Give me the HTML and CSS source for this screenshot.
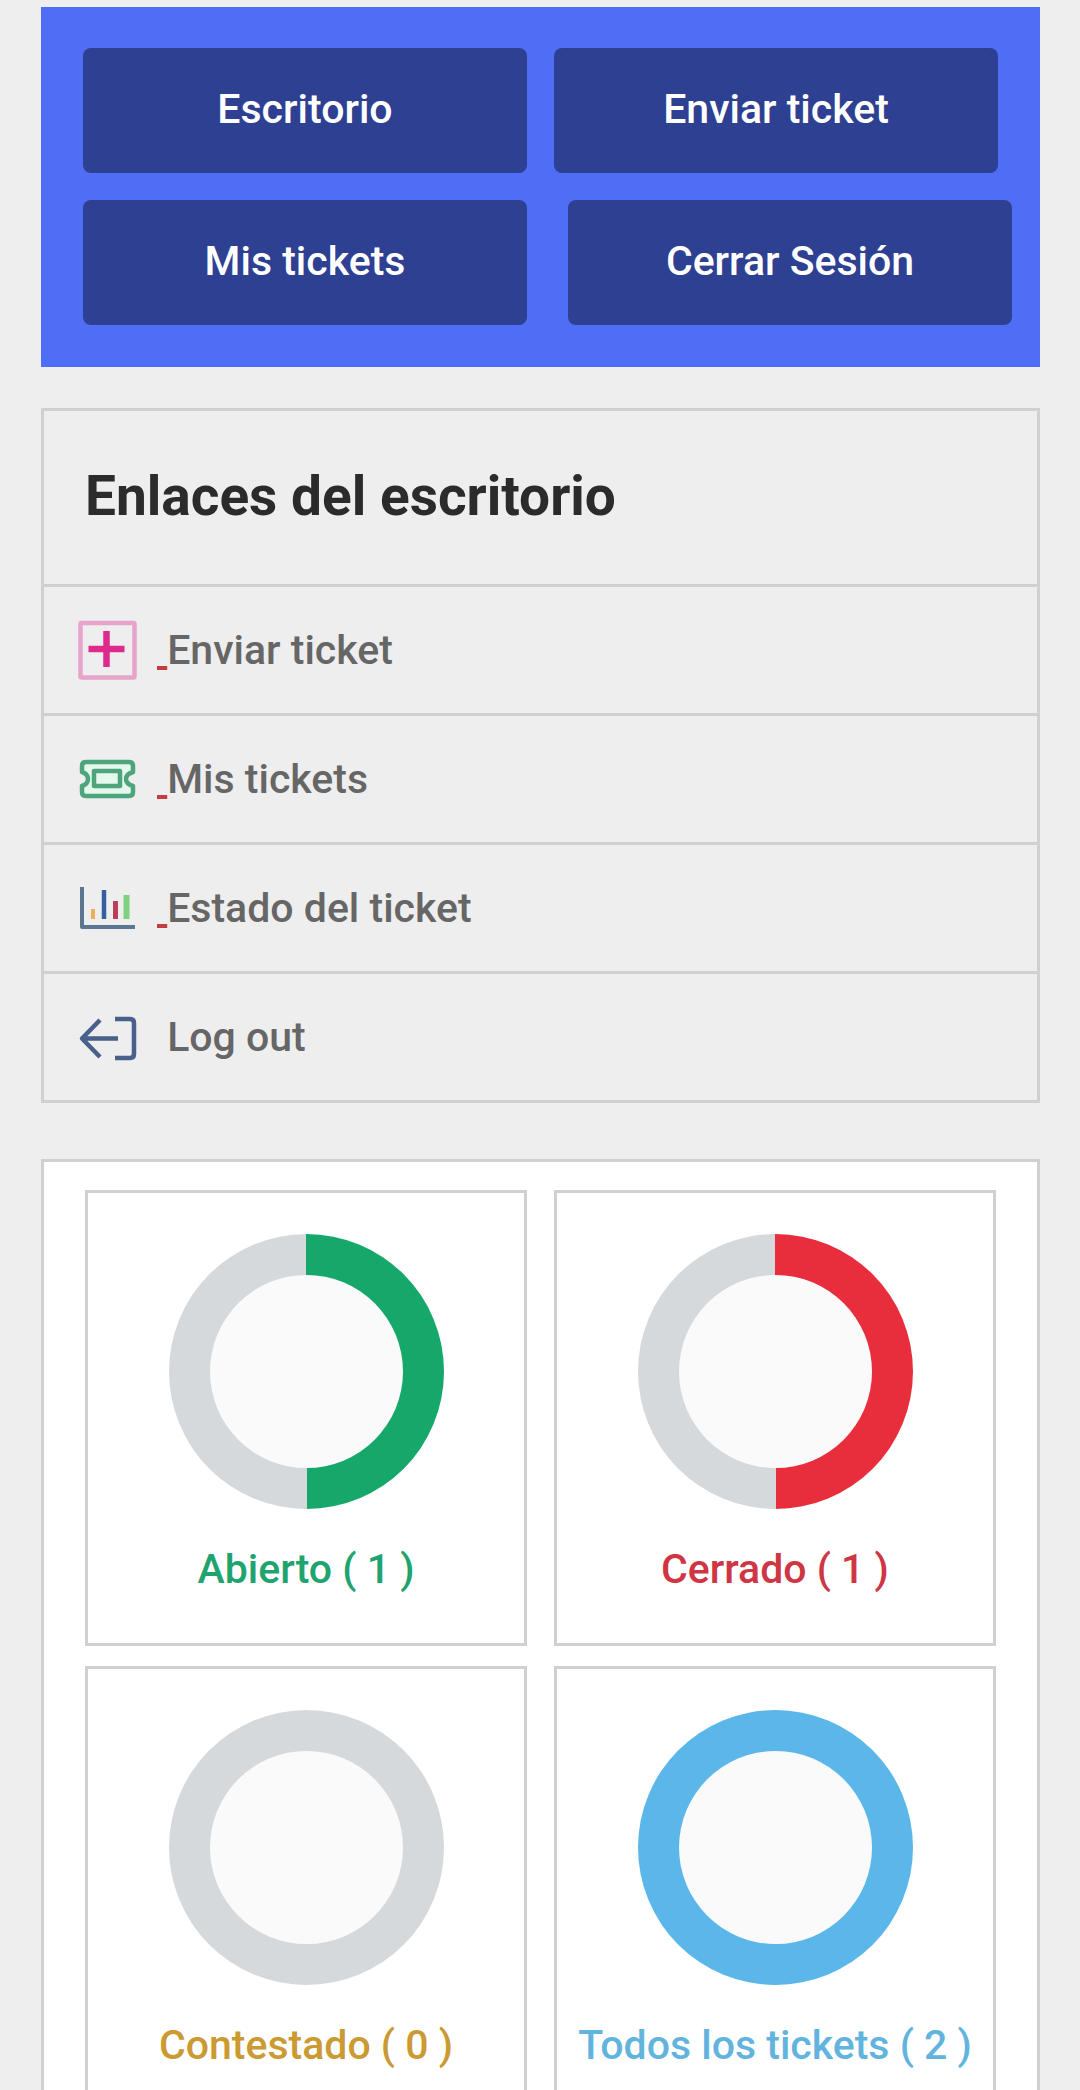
FILE: index.html
```html
<!DOCTYPE html>
<html lang="es">
<head>
    <meta charset="UTF-8">
    <meta name="viewport" content="width=device-width, initial-scale=1.0">
    <title>Escritorio</title>
    <link rel="stylesheet" href="styles.css">
</head>
<body>
    <nav class="top-menu">
        <a class="menu-button" href="#escritorio">Escritorio</a>
        <a class="menu-button" href="#enviar">Enviar ticket</a>
        <a class="menu-button" href="#tickets">Mis tickets</a>
        <a class="menu-button menu-logout" href="#salir">Cerrar Sesión</a>
    </nav>

    <section class="links-panel">
        <h2>Enlaces del escritorio</h2>
        <a class="link-row" href="#enviar">
            <svg class="link-icon" viewBox="0 0 60 60" fill="none">
                <rect x="3.5" y="3" width="54" height="54.5" rx="1" stroke="#e8a3cb" stroke-width="4.5"/>
                <path d="M29.5 11v36M11.5 29h36" stroke="#dd2a8c" stroke-width="6.5"/>
            </svg>
            <span class="link-mark">&nbsp;</span><span class="link-text">Enviar ticket</span>
        </a>
        <a class="link-row" href="#tickets">
            <svg class="link-icon" viewBox="0 0 60 60" fill="#e6f8ee" stroke="#4fa57b" stroke-width="4.5" stroke-linejoin="round">
                <path d="M9 13H52Q56 13 56 17V23Q49 25 49 30Q49 35 56 37V43Q56 47 52 47H9Q5 47 5 43V37Q11 35 11 30Q11 25 5 23V17Q5 13 9 13Z"/>
                <rect x="17" y="22" width="26" height="15"/>
            </svg>
            <span class="link-mark">&nbsp;</span><span class="link-text">Mis tickets</span>
        </a>
        <a class="link-row" href="#estado">
            <svg class="link-icon" viewBox="0 0 60 60" fill="none" stroke-width="4">
                <path d="M5 9V49H58" stroke="#5b7690" stroke-linejoin="round"/>
                <path d="M16 31V41" stroke="#f0ad5e"/>
                <path d="M27 12V41" stroke="#3560a0" stroke-width="4.5"/>
                <path d="M38.5 23V41" stroke="#b8405c" stroke-width="5"/>
                <path d="M49.5 17V41" stroke="#7fd07f" stroke-width="6"/>
            </svg>
            <span class="link-mark">&nbsp;</span><span class="link-text">Estado del ticket</span>
        </a>
        <a class="link-row" href="#salir">
            <svg class="link-icon" viewBox="0 0 60 60" fill="none" stroke="#48608a" stroke-width="4.5" stroke-linejoin="round">
                <path d="M41 31.5H5M23 13L5 31.5L23 50"/>
                <path d="M38 12H53Q57 12 57 16V47Q57 51 53 51H38"/>
            </svg>
            <span class="link-mark no-line">&nbsp;</span><span class="link-text">Log out</span>
        </a>
    </section>

    <section class="stats-panel">
        <a class="stat-card open" href="#abierto">
            <div class="ring" style="--percent: 50%"></div>
            <div class="stat-label">Abierto ( 1 )</div>
        </a>
        <a class="stat-card closed" href="#cerrado">
            <div class="ring" style="--percent: 50%"></div>
            <div class="stat-label">Cerrado ( 1 )</div>
        </a>
        <a class="stat-card answered" href="#contestado">
            <div class="ring" style="--percent: 0%"></div>
            <div class="stat-label">Contestado ( 0 )</div>
        </a>
        <a class="stat-card all" href="#todos">
            <div class="ring" style="--percent: 100%"></div>
            <div class="stat-label">Todos los tickets ( 2 )</div>
        </a>
    </section>
</body>
</html>
```

FILE: styles.css
```css
* {
    margin: 0;
    padding: 0;
    box-sizing: border-box;
}

body {
    padding: 7px 40px 41px 41px;
    background: #eee;
    font-family: Roboto, "Liberation Sans", sans-serif;
    font-size: 41px;
    font-weight: 500;
    line-height: 66px;
}

a {
    color: inherit;
    text-decoration: none;
}

/* Top menu */
.top-menu {
    display: flex;
    flex-wrap: wrap;
    gap: 27px;
    padding: 41px 28px 42px 42px;
    background: #4f6df5;
}

.menu-button {
    width: calc((100% - 41px) / 2);
    padding: 28px 0 31px;
    border-radius: 8px;
    background: #2e4092;
    color: #fff;
    text-align: center;
}

.menu-logout {
    margin-left: 14px;
}

/* Dashboard links */
.links-panel {
    margin-top: 41px;
    border: 3px solid #d0d0d0;
}

.links-panel h2 {
    padding: 52px 41px 55px;
    color: #2b2b2b;
    font-size: 55px;
    font-weight: 700;
}

.link-row {
    display: flex;
    align-items: center;
    padding: 30px 33px;
    border-top: 3px solid #d0d0d0;
    color: #666;
}

.link-icon {
    width: 60px;
    height: 60px;
    margin-right: 20px;
}

.link-mark {
    color: #c23c40;
    text-decoration: underline;
    text-decoration-thickness: 4px;
}

.link-mark.no-line {
    text-decoration: none;
}

/* Ticket counters */
.stats-panel {
    display: grid;
    grid-template-columns: 1fr 1fr;
    gap: 20px 27px;
    margin-top: 56px;
    padding: 28px 41px;
    border: 3px solid #d0d0d0;
    background: #fff;
}

.stat-card {
    padding: 41px 0;
    border: 3px solid #d0d0d0;
    text-align: center;
}

.ring {
    width: 275px;
    height: 275px;
    margin: 0 auto 27px;
    padding: 41px;
    border-radius: 50%;
    background: conic-gradient(var(--ring) var(--percent), #d6d9dc 0);
}

.ring::before {
    content: "";
    display: block;
    height: 100%;
    border-radius: 50%;
    background: #fafafa;
}

.open {
    --ring: #16a76a;
    color: #1fa36f;
}

.closed {
    --ring: #e82d3d;
    color: #d03543;
}

.answered {
    --ring: #d79922;
    color: #cb9a33;
}

.all {
    --ring: #5bb7e9;
    color: #62b4de;
}
```
